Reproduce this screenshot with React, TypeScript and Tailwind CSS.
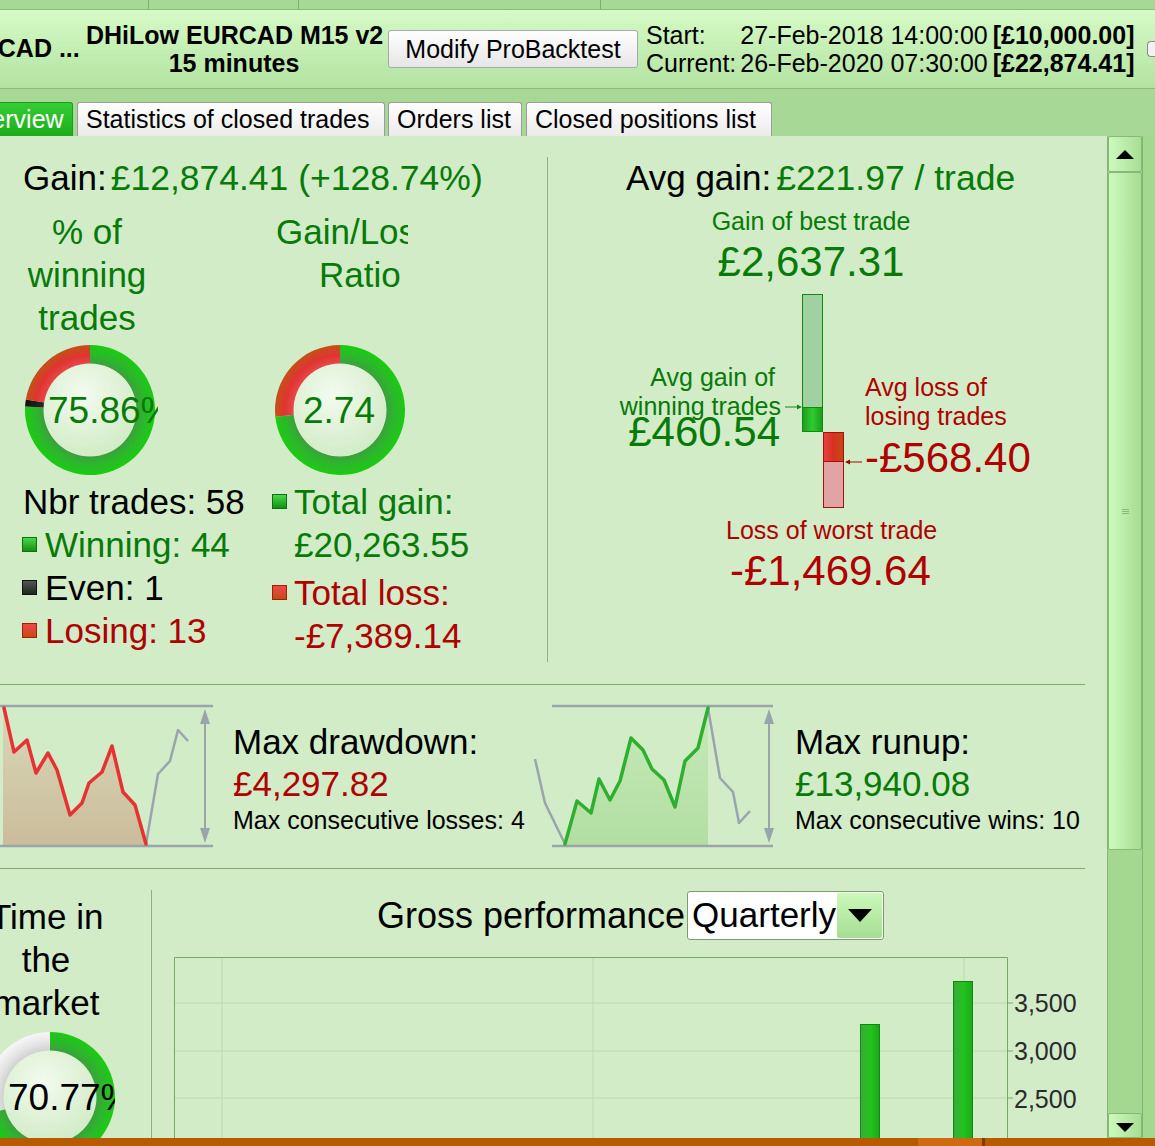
import React from "react";

const GT = "text-[#087a08]";
const RT = "text-[#b00000]";

function polar(cx: number, cy: number, r: number, deg: number): [number, number] {
  const a = ((deg - 90) * Math.PI) / 180;
  return [cx + r * Math.cos(a), cy + r * Math.sin(a)];
}

function arcPath(cx: number, cy: number, r1: number, r2: number, a0: number, a1: number) {
  const large = a1 - a0 > 180 ? 1 : 0;
  const [x0, y0] = polar(cx, cy, r2, a0);
  const [x1, y1] = polar(cx, cy, r2, a1);
  const [x2, y2] = polar(cx, cy, r1, a1);
  const [x3, y3] = polar(cx, cy, r1, a0);
  return `M${x0} ${y0} A${r2} ${r2} 0 ${large} 1 ${x1} ${y1} L${x2} ${y2} A${r1} ${r1} 0 ${large} 0 ${x3} ${y3} Z`;
}

type Seg = { from: number; to: number; kind: "g" | "r" | "k" | "w" };

function Donut({
  id,
  segs,
  text,
  boxClass,
  textClass,
}: {
  id: string;
  segs: Seg[];
  text: string;
  boxClass: string;
  textClass: string;
}) {
  return (
    <div className={`relative h-[130px] overflow-hidden shrink-0 ${boxClass}`}>
      <svg width="130" height="130" viewBox="0 0 130 130" className="block">
        <defs>
          <radialGradient id={`${id}g`} gradientUnits="userSpaceOnUse" cx="65" cy="65" r="65">
            <stop offset="0.7" stopColor="#3d9d3d" />
            <stop offset="0.84" stopColor="#2cb72c" />
            <stop offset="1" stopColor="#1bcb12" />
          </radialGradient>
          <radialGradient id={`${id}r`} gradientUnits="userSpaceOnUse" cx="65" cy="65" r="65">
            <stop offset="0.7" stopColor="#e84a4a" />
            <stop offset="0.84" stopColor="#e03434" />
            <stop offset="1" stopColor="#c55016" />
          </radialGradient>
          <radialGradient id={`${id}k`} gradientUnits="userSpaceOnUse" cx="65" cy="65" r="65">
            <stop offset="0.7" stopColor="#2a2a2a" />
            <stop offset="1" stopColor="#111" />
          </radialGradient>
          <radialGradient id={`${id}w`} gradientUnits="userSpaceOnUse" cx="65" cy="65" r="65">
            <stop offset="0.7" stopColor="#cfcfcf" />
            <stop offset="0.85" stopColor="#e6e6e6" />
            <stop offset="1" stopColor="#f7f7f7" />
          </radialGradient>
          <radialGradient id={`${id}i`} gradientUnits="userSpaceOnUse" cx="58" cy="50" r="60">
            <stop offset="0" stopColor="#f3fbef" />
            <stop offset="1" stopColor="#d3ecc8" />
          </radialGradient>
        </defs>
        {segs.map((s, i) => (
          <path key={i} d={arcPath(65, 65, 46, 65, s.from, s.to)} fill={`url(#${id}${s.kind})`} />
        ))}
        <circle cx="65" cy="65" r="46.5" fill={`url(#${id}i)`} />
      </svg>
      <div className={`absolute top-0 h-[130px] flex items-center whitespace-nowrap text-[37px] leading-none ${textClass}`}>
        {text}
      </div>
    </div>
  );
}

function Square({ kind }: { kind: "g" | "k" | "r" }) {
  const cls =
    kind === "g"
      ? "bg-gradient-to-b from-[#4ad84a] to-[#119011] border-[#0c700c]"
      : kind === "k"
      ? "bg-gradient-to-b from-[#555] to-[#1a2a1a] border-[#111]"
      : "bg-gradient-to-b from-[#f04848] to-[#c44a10] border-[#a02000]";
  return <div className={`w-[15px] h-[15px] shrink-0 border ${cls}`} />;
}

function TopStrip() {
  return (
    <div className="h-[9px] shrink-0 flex bg-[#a8d896]">
      <div className="w-[148px]" />
      <div className="w-px bg-[#7eae6e]" />
      <div className="w-[149px]" />
      <div className="w-px bg-[#7eae6e]" />
      <div className="w-[301px]" />
      <div className="w-px bg-[#7eae6e]" />
    </div>
  );
}

function Header() {
  return (
    <div className="h-[80px] shrink-0 flex items-center border-t border-b border-[#8cbc7c] bg-gradient-to-b from-[#d6fac7] to-[#b3e3a1] text-[25px] whitespace-nowrap">
      <div className="w-[141px] ml-[-55px] shrink-0 font-bold">EURCAD ...</div>
      <div className="w-[296px] shrink-0 text-center font-bold leading-[28px]">
        <div>DHiLow EURCAD M15 v2</div>
        <div>15 minutes</div>
      </div>
      <button className="ml-[6px] w-[250px] h-[38px] shrink-0 rounded-[3px] border border-[#a9a9a9] bg-gradient-to-b from-white to-[#e6e6e6] text-[25px] leading-none">
        Modify ProBacktest
      </button>
      <div className="ml-[8px] shrink-0 grid grid-cols-[auto_auto_auto] leading-[28px]">
        <div>Start:</div>
        <div className="ml-[4px] text-right">27-Feb-2018 14:00:00</div>
        <div className="ml-[5px] font-bold">[£10,000.00]</div>
        <div>Current:</div>
        <div className="ml-[4px] text-right">26-Feb-2020 07:30:00</div>
        <div className="ml-[5px] font-bold">[£22,874.41]</div>
      </div>
      <div className="ml-auto w-[8px] h-[16px] shrink-0 rounded-l-[4px] border border-r-0 border-[#8a8a8a] bg-[#f2f2f2]" />
    </div>
  );
}

function Tabs() {
  const tab =
    "h-[34px] shrink-0 flex items-center px-[8px] rounded-t-[3px] border border-b-0 border-[#9c9c9c] bg-gradient-to-b from-white to-[#ebebeb] text-[25px] whitespace-nowrap";
  return (
    <div className="h-[47px] shrink-0 flex items-end bg-[#a8d896]">
      <div className="ml-[-50px] w-[123px] h-[34px] shrink-0 flex items-center justify-center rounded-t-[3px] border border-b-0 border-[#17a017] bg-gradient-to-b from-[#35cc35] to-[#1aae1a] text-white text-[25px]">
        Overview
      </div>
      <div className={`ml-[4px] w-[308px] ${tab}`}>Statistics of closed trades</div>
      <div className={`ml-[3px] w-[134px] ${tab}`}>Orders list</div>
      <div className={`ml-[4px] w-[246px] ${tab}`}>Closed positions list</div>
    </div>
  );
}

function LeftStats() {
  return (
    <div className="w-[547px] shrink-0 pl-[22px] flex flex-col">
      <div className="pt-[22px] pl-px leading-[40px] text-[35px] whitespace-nowrap">
        <span>Gain:</span>
        <span className={`ml-[4px] text-[35.5px] ${GT}`}>£12,874.41 (+128.74%)</span>
      </div>
      <div className="flex mt-[12px]">
        <div className="w-[250px] flex flex-col">
          <div className={`w-[130px] text-center text-[35px] leading-[43px] ${GT}`}>
            <div>% of</div>
            <div>winning</div>
            <div>trades</div>
          </div>
          <div className="mt-[6px] ml-[3px]">
            <Donut
              id="d1"
              boxClass="w-[133px]"
              textClass={`left-[23px] ${GT}`}
              text="75.86%"
              segs={[
                { from: 0, to: 273.1, kind: "g" },
                { from: 273.1, to: 279.3, kind: "k" },
                { from: 279.3, to: 360, kind: "r" },
              ]}
            />
          </div>
          <div className="mt-[5px] text-[35px] leading-[43px] whitespace-nowrap">
            <div className="pl-px">Nbr trades: 58</div>
            <div className="flex items-center gap-[8px]">
              <Square kind="g" />
              <span className={GT}>Winning: 44</span>
            </div>
            <div className="flex items-center gap-[8px]">
              <Square kind="k" />
              <span>Even: 1</span>
            </div>
            <div className="flex items-center gap-[8px]">
              <Square kind="r" />
              <span className={RT}>Losing: 13</span>
            </div>
          </div>
        </div>
        <div className="w-[275px] flex flex-col">
          <div className={`text-[35px] leading-[43px] ${GT}`}>
            <div className="ml-[4px] w-[132px] overflow-hidden whitespace-nowrap">Gain/Loss</div>
            <div className="pl-[47px]">Ratio</div>
            <div>&nbsp;</div>
          </div>
          <div className="mt-[6px] ml-[3px]">
            <Donut
              id="d2"
              boxClass="w-[133px]"
              textClass={`left-[28px] ${GT}`}
              text="2.74"
              segs={[
                { from: 0, to: 264, kind: "g" },
                { from: 264, to: 360, kind: "r" },
              ]}
            />
          </div>
          <div className="mt-[5px] text-[35px] leading-[43px] whitespace-nowrap">
            <div className="flex items-center gap-[7px]">
              <Square kind="g" />
              <span className={GT}>Total gain:</span>
            </div>
            <div className={`pl-[22px] ${GT}`}>£20,263.55</div>
            <div className="mt-[5px] flex items-center gap-[7px]">
              <Square kind="r" />
              <span className={RT}>Total loss:</span>
            </div>
            <div className={`pl-[22px] ${RT}`}>-£7,389.14</div>
          </div>
        </div>
      </div>
    </div>
  );
}

function RightStats() {
  return (
    <div className="w-[537px] shrink-0 flex flex-col whitespace-nowrap">
      <div className="pt-[22px] pl-[78px] leading-[40px] text-[35px]">
        <span>Avg gain:</span>
        <span className={`ml-[5px] text-[35.5px] ${GT}`}>£221.97 / trade</span>
      </div>
      <div className={`mt-[8px] w-[526px] text-center text-[25px] leading-[30px] ${GT}`}>Gain of best trade</div>
      <div className={`mt-[3px] w-[526px] text-center text-[42px] leading-[46px] ${GT}`}>£2,637.31</div>
      <div className="relative h-[223px]">
        <div className="absolute left-[254px] top-[9px] w-[21px] h-[138px] border border-[#128a12] flex flex-col">
          <div className="flex-1 bg-[#a0d1a0]" />
          <div className="h-[24px] border-t border-[#128a12] bg-gradient-to-r from-[#1f9f1f] via-[#2fcc2f] to-[#1aa01a]" />
        </div>
        <div className="absolute left-[275px] top-[147px] w-[21px] h-[76px] border border-[#a01010] flex flex-col">
          <div className="h-[29px] border-b border-[#a01010] bg-gradient-to-r from-[#e84040] via-[#d83020] to-[#c24a12]" />
          <div className="flex-1 bg-[#e2a3a3]" />
        </div>
        <svg className="absolute left-[237px] top-[118px]" width="17" height="8" viewBox="0 0 17 8">
          <line x1="0" y1="4" x2="13" y2="4" stroke="#128a12" strokeWidth="1" />
          <polygon points="17,4 12,1.5 12,6.5" fill="#128a12" />
        </svg>
        <svg className="absolute left-[297px] top-[173px]" width="17" height="8" viewBox="0 0 17 8">
          <line x1="4" y1="4" x2="17" y2="4" stroke="#a00000" strokeWidth="1" />
          <polygon points="0,4 5,1.5 5,6.5" fill="#a00000" />
        </svg>
        <div className={`absolute left-0 top-[78px] w-[233px] text-right text-[25px] leading-[29px] ${GT}`}>
          <div className="pr-[6px]">Avg gain of</div>
          <div>winning trades</div>
        </div>
        <div className={`absolute left-0 top-[124px] w-[232px] text-right text-[42px] leading-[46px] ${GT}`}>£460.54</div>
        <div className={`absolute left-[317px] top-[88px] text-[25px] leading-[29px] ${RT}`}>
          <div>Avg loss of</div>
          <div>losing trades</div>
        </div>
        <div className={`absolute left-[317px] top-[150px] text-[42px] leading-[46px] ${RT}`}>-£568.40</div>
      </div>
      <div className={`mt-[7px] ml-[178px] text-[25px] leading-[30px] ${RT}`}>Loss of worst trade</div>
      <div className={`mt-[3px] ml-[182px] text-[42px] leading-[46px] ${RT}`}>-£1,469.64</div>
    </div>
  );
}

function Frame({ x0, x1, ax }: { x0: number; x1: number; ax: number }) {
  return (
    <g>
      <line x1={x0} y1="6" x2={x1} y2="6" stroke="#9aa4ad" strokeWidth="2.5" />
      <line x1={x0} y1="146" x2={x1} y2="146" stroke="#9aa4ad" strokeWidth="2.5" />
      <line x1={ax} y1="16" x2={ax} y2="136" stroke="#9aa4ad" strokeWidth="2" />
      <polygon points={`${ax},9 ${ax - 5},24 ${ax + 5},24`} fill="#9aa4ad" />
      <polygon points={`${ax},143 ${ax - 5},128 ${ax + 5},128`} fill="#9aa4ad" />
    </g>
  );
}

function DrawdownChart() {
  const red = "4,8 14,52 27,40 36,73 48,53 57,70 70,115 82,103 89,83 102,72 112,46 123,92 135,105 146,144";
  return (
    <svg width="213" height="150" viewBox="0 0 213 150" className="block shrink-0">
      <defs>
        <linearGradient id="ddf" x1="0" y1="0" x2="0" y2="1">
          <stop offset="0" stopColor="#d8d8b8" />
          <stop offset="1" stopColor="#cbbc9a" />
        </linearGradient>
      </defs>
      <polygon points={`3,8 ${red} 146,146 3,146`} fill="url(#ddf)" />
      <Frame x0={0} x1={213} ax={205} />
      <polyline points="146,144 158,74 170,61 178,30 188,41" fill="none" stroke="#9aa4ad" strokeWidth="2.5" strokeLinejoin="round" />
      <polyline points={red} fill="none" stroke="#e63232" strokeWidth="3.5" strokeLinejoin="round" strokeLinecap="round" />
    </svg>
  );
}

function RunupChart() {
  const grn = "35,144 47,101 61,113 69,79 80,100 90,81 101,38 113,50 122,69 134,80 145,107 155,61 168,48 178,8";
  return (
    <svg width="250" height="150" viewBox="0 0 250 150" className="block shrink-0">
      <defs>
        <linearGradient id="ruf" x1="0" y1="0" x2="0" y2="1">
          <stop offset="0" stopColor="#c6e9b8" />
          <stop offset="1" stopColor="#b2dea2" />
        </linearGradient>
      </defs>
      <polygon points={`${grn} 178,146 35,146`} fill="url(#ruf)" />
      <Frame x0={22} x1={243} ax={239} />
      <polyline points="5,59 15,103 35,144" fill="none" stroke="#9aa4ad" strokeWidth="2.5" strokeLinejoin="round" />
      <polyline points="178,8 190,78 203,92 209,123 220,111" fill="none" stroke="#9aa4ad" strokeWidth="2.5" strokeLinejoin="round" />
      <polyline points={grn} fill="none" stroke="#2eb02e" strokeWidth="3.5" strokeLinejoin="round" strokeLinecap="round" />
    </svg>
  );
}

function StatText({ title, value, valueClass, sub }: { title: string; value: string; valueClass: string; sub: string }) {
  return (
    <div className="mt-[36px] whitespace-nowrap">
      <div className="text-[35px] leading-[42px]">{title}</div>
      <div className={`text-[35px] leading-[42px] ${valueClass}`}>{value}</div>
      <div className="text-[25px] leading-[30px]">{sub}</div>
    </div>
  );
}

function Section2() {
  return (
    <div className="w-[1085px] h-[185px] shrink-0 flex border-t border-b border-[#7fae70]">
      <div className="w-[530px] shrink-0 flex items-start">
        <div className="mt-[15px]">
          <DrawdownChart />
        </div>
        <div className="ml-[20px]">
          <StatText title="Max drawdown:" value="£4,297.82" valueClass={RT} sub="Max consecutive losses: 4" />
        </div>
      </div>
      <div className="flex items-start">
        <div className="mt-[15px]">
          <RunupChart />
        </div>
        <div className="ml-[15px]">
          <StatText title="Max runup:" value="£13,940.08" valueClass={GT} sub="Max consecutive wins: 10" />
        </div>
      </div>
    </div>
  );
}

function PerfChart() {
  return (
    <svg width="840" height="200" viewBox="0 0 840 200" className="block shrink-0">
      <defs>
        <linearGradient id="pb" x1="0" y1="0" x2="1" y2="0">
          <stop offset="0" stopColor="#3aaa3a" />
          <stop offset="0.55" stopColor="#22c41c" />
          <stop offset="1" stopColor="#1aa81a" />
        </linearGradient>
      </defs>
      {[46, 94, 141, 189].map((y) => (
        <line key={y} x1="1" y1={y} x2="833" y2={y} stroke="#bcdab0" strokeWidth="1" />
      ))}
      {[48, 419, 790].map((x) => (
        <line key={x} x1={x} y1="1" x2={x} y2="200" stroke="#bcdab0" strokeWidth="1" />
      ))}
      <path d="M0.5 200 V0.5 H833.5 V200" fill="none" stroke="#78a868" strokeWidth="1" />
      {[46, 94, 141, 189].map((y) => (
        <line key={`t${y}`} x1="833" y1={y} x2="839" y2={y} stroke="#78a868" strokeWidth="1" />
      ))}
      <rect x="686.5" y="67.5" width="19" height="140" fill="url(#pb)" stroke="#118811" strokeWidth="1" />
      <rect x="779.5" y="24.5" width="19" height="180" fill="url(#pb)" stroke="#118811" strokeWidth="1" />
    </svg>
  );
}

function Section3() {
  return (
    <div className="w-[1085px] h-[269px] shrink-0 flex overflow-hidden">
      <div className="w-[151px] shrink-0 flex flex-col">
        <div className="pt-[26px] ml-[-10px] w-[112px] text-center text-[35px] leading-[43px] whitespace-nowrap">
          <div>Time in</div>
          <div>the</div>
          <div>market</div>
        </div>
        <div className="mt-[8px] ml-[-15px]">
          <Donut
            id="d3"
            boxClass="w-[130px]"
            textClass="left-[23px] text-black"
            text="70.77%"
            segs={[
              { from: 0, to: 254.8, kind: "g" },
              { from: 254.8, to: 360, kind: "w" },
            ]}
          />
        </div>
      </div>
      <div className="w-px shrink-0 mt-[21px] bg-[#8faf86]" />
      <div className="flex-1 flex flex-col">
        <div className="mt-[22px] h-[49px] pl-[225px] flex items-center whitespace-nowrap">
          <span className="text-[36px]">Gross performance</span>
          <div className="ml-[2px] w-[197px] h-[49px] shrink-0 flex items-center rounded-[3px] border border-[#7c9c70] bg-white">
            <span className="pl-[4px] text-[35px]">Quarterly</span>
            <div className="ml-auto mr-px w-[45px] h-[45px] rounded-[2px] bg-gradient-to-b from-[#cbfaba] to-[#a6dd92] flex items-center justify-center">
              <svg width="24" height="13" viewBox="0 0 24 13">
                <polygon points="0,0 24,0 12,13" fill="#000" />
              </svg>
            </div>
          </div>
        </div>
        <div className="mt-[17px] ml-[22px] flex">
          <PerfChart />
          <div className="pt-[22px] text-[25px] leading-[48px] text-[#2a2a2a]">
            <div>3,500</div>
            <div>3,000</div>
            <div>2,500</div>
            <div>2,000</div>
          </div>
        </div>
      </div>
    </div>
  );
}

function Scrollbar() {
  return (
    <div className="w-[35px] h-full shrink-0 flex flex-col bg-[#a4d890] border-l border-[#86b676]">
      <div className="h-[36px] shrink-0 flex items-center justify-center rounded-[2px] border border-[#88b878] bg-gradient-to-r from-[#cdfabd] to-[#a8de94]">
        <svg width="18" height="9" viewBox="0 0 18 9">
          <polygon points="0,9 18,9 9,0" fill="#000" />
        </svg>
      </div>
      <div className="h-[678px] shrink-0 flex items-center justify-center rounded-[2px] border border-[#88b878] bg-gradient-to-r from-[#cdfabd] to-[#a6dc92]">
        <div className="flex flex-col gap-px">
          <div className="w-[7px] h-px bg-[#8ab87a]" />
          <div className="w-[7px] h-px bg-[#8ab87a]" />
          <div className="w-[7px] h-px bg-[#8ab87a]" />
        </div>
      </div>
      <div className="flex-1" />
      <div className="h-[25px] shrink-0 flex items-start justify-center pt-[9px] rounded-[2px] border border-[#88b878] bg-gradient-to-r from-[#cdfabd] to-[#a8de94]">
        <svg width="18" height="9" viewBox="0 0 18 9">
          <polygon points="0,0 18,0 9,9" fill="#000" />
        </svg>
      </div>
    </div>
  );
}

export default function App() {
  return (
    <div className="w-[1155px] h-[1146px] overflow-hidden flex flex-col bg-[#a8d896] font-['Liberation_Sans',Arial,sans-serif] text-black">
      <TopStrip />
      <Header />
      <Tabs />
      <div className="h-[1002px] shrink-0 flex">
        <div className="w-[1107px] h-full shrink-0 bg-[#d2ecc8] overflow-hidden flex flex-col">
          <div className="h-[548px] shrink-0 flex">
            <LeftStats />
            <div className="w-px h-[505px] mt-[21px] shrink-0 bg-[#8faf86]" />
            <RightStats />
          </div>
          <Section2 />
          <Section3 />
        </div>
        <Scrollbar />
        <div className="w-[13px] h-full shrink-0 bg-[#a3d88f] border-l border-[#84b474]" />
      </div>
      <div className="h-[8px] shrink-0 flex">
        <div className="w-[918px] bg-[#b85a00]" />
        <div className="w-[64px] bg-[#d06a12]" />
        <div className="w-[3px] bg-[#7a3a00]" />
        <div className="flex-1 bg-[#b85a00]" />
      </div>
    </div>
  );
}
